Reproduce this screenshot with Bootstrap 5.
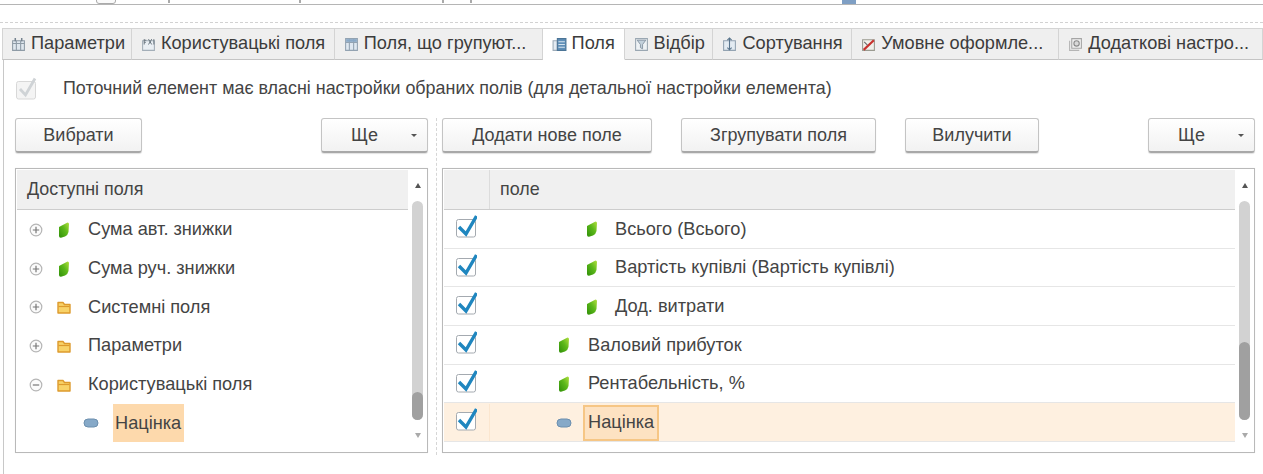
<!DOCTYPE html>
<html lang="uk">
<head>
    <meta charset="UTF-8">
    <meta name="viewport" content="width=device-width, initial-scale=1.0">
    <title>Поля</title>
    <link rel="stylesheet" href="https://cdn.jsdelivr.net/npm/bootstrap@5.3.3/dist/css/bootstrap.min.css">
    <style>
        html, body { height: 474px; overflow: hidden; }
        body { background: #fff; font-family: "Liberation Sans", Arial, sans-serif; font-size: 17.9px; color: #444; }
        .top-strip { height: 5px; border-bottom: 1px solid #b5b5b5; overflow: hidden; }
        .top-check { width: 20px; height: 12px; margin-top: -8px; margin-left: 96px; border: 1px solid #aaa; border-radius: 3px; background: #fafafa; }
        .top-dot { width: 2px; height: 3px; background: #aaa; }
        .top-dot-a { margin-left: 52px; }
        .top-dot-b { margin-left: 129px; }
        .top-dot-c { margin-left: 141px; }
        .top-dot-d { margin-left: 26px; }
        .top-blob { width: 14px; height: 4px; background: #7f9fc4; margin-left: 370px; }
        .dash-line { height: 0; border-top: 1px dashed #d2d2d2; margin-top: 17px; margin-bottom: 5px; }
        .tab-bar { padding-left: 2px; border-bottom: 0; flex-wrap: nowrap; height: 32px; }
        .tab-item { display: flex; align-items: center; gap: 5px; height: 32px; background: #efefef; color: #3c3c3c; border: 1px solid #d4d4d4; border-left: 0; border-bottom-color: #c4c4c4; font-size: 18.2px; white-space: nowrap; overflow: hidden; padding: 0 0 0 9px; }
        .tab-item:first-child { border-left: 1px solid #d4d4d4; padding-left: 8px; }
        .tab-item.is-active { background: #fff; border-bottom-color: #fff; }
        .tab-a { width: 130px; } .tab-b { width: 203px; } .tab-c { width: 208px; } .tab-d { width: 82px; }
        .tab-e { width: 89px; } .tab-f { width: 139px; } .tab-g { width: 207px; } .tab-h { width: 204px; }
        .tab-ico { width: 15px; height: 15px; flex: none; }
        .panel-body { border-left: 1px solid #c8c8c8; margin-left: 3px; padding: 17px 8px 0 11px; height: 415px; }
        .own-row { height: 23px; margin-bottom: 18px; }
        .own-check { width: 21px; height: 23px; margin-left: 1px; margin-right: 26px; flex: none; }
        .split { gap: 14px; }
        .side-left { width: 413px; flex: none; }
        .side-right { flex: 1; min-width: 0; }
        .split-line { position: relative; }
        .split-line::after { content: ""; position: absolute; left: 420.5px; top: 0; bottom: -2px; border-left: 1px dashed #d6d6d6; }
        .tool-row { height: 35px; margin-bottom: 15px; }
        .tool-btn { height: 35px; padding: 0; font-size: 18px; color: #444; background: linear-gradient(#fff, #f2f2f2); border: 1px solid #c4c4c4; border-bottom: 2px solid #a8a8a8; border-radius: 3px; box-shadow: 0 1px 1px rgba(0,0,0,.12); }
        .tool-btn:hover { color: #444; background: #f2f2f2; border-color: #c4c4c4; border-bottom-color: #a8a8a8; }
        .btn-pick { width: 127px; } .btn-add { width: 210px; } .btn-group-f { width: 195px; } .btn-del { width: 134px; } .btn-more { width: 107px; }
        .btn-group-f { margin-left: 29px; } .btn-del { margin-left: 29px; }
        .more-btn { display: flex; align-items: center; }
        .more-btn span { flex: 1; padding-right: 4px; }
        .more-btn::after { content: ""; width: 0; height: 0; border-left: 3px solid transparent; border-right: 3px solid transparent; border-top: 3px solid #555; margin-right: 10px; }
        .grid-box { height: 285px; border: 1px solid #b9b9b9; padding: 1px; box-shadow: 0 0 1px rgba(0,0,0,.08); }
        .grid-main { flex: 1; min-width: 0; }
        .grid-head { height: 40px; background: #f0f0f0; border-bottom: 1px solid #cdcdcd; }
        .head-check { width: 46px; height: 100%; border-right: 1px solid #dcdcdc; flex: none; }
        .head-text { padding-left: 10px; }
        .tree-row { height: 38.7px; padding-top: 1px; font-size: 18.2px; }
        .tree-toggle { width: 14px; height: 14px; margin-left: 12px; flex: none; }
        .tree-icon { width: 16px; height: 18px; flex: none; }
        .tree-toggle + .tree-icon { margin-left: 13px; margin-right: 16px; }
        .child-icon { margin-left: 66px; margin-right: 14px; }
        .hit-left { background: #fdd9ac; height: 100%; padding: 0 3px 0 2px; display: flex; align-items: center; }
        .grid-row { height: 38.7px; padding-top: 1px; font-size: 18.2px; border-bottom: 1px solid #e6e6e6; }
        .grid-row.is-current { background: #fef0e0; }
        .check-cell { width: 46px; height: 100%; flex: none; padding: 4px 0 0 12px; }
        .is-current .check-cell { border-right: 1px solid #fbe6cf; }
        .row-check { width: 21px; height: 23px; display: block; }
        .lvl-2 { margin-left: 94px; margin-right: 15px; }
        .lvl-1 { margin-left: 66px; margin-right: 16px; }
        .hit-right { background: #fde2c2; border: 2px solid #f6c685; height: 36px; padding: 0 3px; display: flex; align-items: center; margin-left: -5px; }
        .scroll-col { width: 18px; flex: none; padding: 0 3px 0 4px; }
        .arrow-up, .arrow-down { height: 31px; flex: none; }
        .arrow-up::before, .arrow-down::before { content: ""; width: 0; height: 0; border-left: 3.5px solid transparent; border-right: 3.5px solid transparent; }
        .arrow-up::before { border-bottom: 5px solid #555; }
        .arrow-down::before { border-top: 5px solid #aaa; }
        .scroll-track { flex: 1; width: 11px; background: #d2d2d2; border-radius: 6px; }
        .thumb-short { height: 28px; width: 11px; background: #a0a0a0; border-radius: 6px; }
        .thumb-long { height: 78px; width: 11px; background: #a0a0a0; border-radius: 6px; }
    </style>
</head>
<body>
    <svg width="0" height="0" class="d-block">
        <defs>
            <linearGradient id="leafg" x1="0" y1="1" x2="1" y2="0"><stop offset="0" stop-color="#2f8f08"/><stop offset=".55" stop-color="#5cb81a"/><stop offset="1" stop-color="#b4e040"/></linearGradient>
            <symbol id="i-table" viewBox="0 0 14 14"><path d="M1.500 3.500h11v9h-11z" fill="#dfe7ee" stroke="#8e9ba6"/><path d="M1.500 6h11M5 3.500v9M9 3.500v9" stroke="#8e9ba6" fill="none"/><path d="M4 1v3M10 1v3" stroke="#75838f" stroke-width="1.400"/></symbol>
            <symbol id="i-fx" viewBox="0 0 14 14"><path d="M1.500 3.500h11v9h-11z" fill="#eaeff4" stroke="#a3aeb8"/><path d="M3 2v5M3 3h2M3 5h1.500M7 2l3 5M10 2l-3 5M12 2v5" stroke="#66727c" stroke-width=".9" fill="none"/></symbol>
            <symbol id="i-group" viewBox="0 0 14 14"><path d="M1.500 1.500h11v11h-11z" fill="#dfe8f1" stroke="#93a3b2"/><path d="M1.500 5h11M5 1.500v11M9 1.500v11" stroke="#93a3b2" fill="none"/><path d="M2 2h10v2.500H2z" fill="#8aa9c6"/></symbol>
            <symbol id="i-fields" viewBox="0 0 14 14"><path d="M1 3.500h4v9H1z" fill="#e4ebf2" stroke="#9dabb8"/><path d="M5 1.500h8v11H5z" fill="#5f8fb8" stroke="#4b7496"/><path d="M6 4.500h6M6 7h6M6 9.500h6" stroke="#d5e3ee"/></symbol>
            <symbol id="i-filter" viewBox="0 0 14 14"><path d="M1.500 1.500h11v11h-11z" fill="#eef2f5" stroke="#9aa7b2"/><path d="M3 3h8L8 7v4L6 10V7z" fill="#c3d1dc" stroke="#7e8e9b" stroke-width=".8"/></symbol>
            <symbol id="i-sort" viewBox="0 0 14 14"><path d="M1.500 3.500h11v9h-11z" fill="#e3ebf2" stroke="#93a3b2"/><path d="M7 1v11M5 3l2-2 2 2M5 10l2 2 2-2" stroke="#58748c" fill="none"/></symbol>
            <symbol id="i-cond" viewBox="0 0 14 14"><path d="M1.500 2.500h11v10h-11z" fill="#f0f0ea" stroke="#9a9a90"/><path d="M2.500 12 12 3" stroke="#c8322e" stroke-width="2"/><path d="M3 4.500l3 3" stroke="#666"/></symbol>
            <symbol id="i-more" viewBox="0 0 14 14"><path d="M3.500 1.500h9v9h-9z" fill="#f0f0f0" stroke="#a5a5a5"/><path d="M1.500 3.500v9h9" fill="none" stroke="#b5b5b5"/><circle cx="8" cy="6" r="2.500" fill="#d8d8d8" stroke="#8a8a8a"/></symbol>
            <symbol id="i-plus" viewBox="0 0 14 14"><circle cx="7" cy="7" r="5.800" fill="#fbfbfb" stroke="#b5b5b5" stroke-width="1.200"/><path d="M3.800 7h6.400M7 3.800v6.400" stroke="#777" stroke-width="1.200"/></symbol>
            <symbol id="i-minus" viewBox="0 0 14 14"><circle cx="7" cy="7" r="5.800" fill="#fbfbfb" stroke="#b5b5b5" stroke-width="1.200"/><path d="M3.800 7h6.400" stroke="#777" stroke-width="1.200"/></symbol>
            <symbol id="i-leaf" viewBox="0 0 16 18"><path d="M3 6L11.500 1.500Q13 1.500 13 3L12.500 11Q12 14 9 15.500L5 16.800Q3 17 3 15Z" fill="url(#leafg)"/></symbol>
            <symbol id="i-folder" viewBox="0 0 16 18"><path d="M2 4.500h5l1.500 2h5.500v8.500H2z" fill="#f8d268" stroke="#dd9a2d" stroke-width="1.400" stroke-linejoin="round"/><path d="M2.500 8.500h11" stroke="#dd9a2d" stroke-width="1.200"/></symbol>
            <symbol id="i-dash" viewBox="0 0 16 18"><rect x="1" y="5" width="14" height="8" rx="4" fill="#86a9c8" stroke="#6c8fae"/></symbol>
            <symbol id="i-check" viewBox="0 0 21 23"><rect x=".5" y="4.500" width="19" height="17.500" rx="2" fill="#fff" stroke="#a4aab0"/><path d="M3 12L10 19L20.500 1" fill="none" stroke="#1f86bf" stroke-width="3.400"/></symbol>
            <symbol id="i-check-off" viewBox="0 0 21 23"><rect x=".5" y="4.500" width="19" height="17.500" rx="2" fill="#f4f4f4" stroke="#d8d8d8"/><path d="M4 12L9.500 18L19 1.500" fill="none" stroke="#cfd3d6" stroke-width="2.800"/></symbol>
        </defs>
    </svg>

    <div class="top-strip d-flex align-items-start">
        <div class="top-check"></div>
        <div class="top-dot top-dot-a"></div>
        <div class="top-dot top-dot-b"></div>
        <div class="top-dot top-dot-c"></div>
        <div class="top-dot top-dot-d"></div>
        <div class="top-blob"></div>
    </div>
    <div class="dash-line"></div>

    <div class="nav tab-bar">
        <div class="tab-item tab-a"><svg class="tab-ico"><use href="#i-table"/></svg>Параметри</div>
        <div class="tab-item tab-b"><svg class="tab-ico"><use href="#i-fx"/></svg>Користувацькі поля</div>
        <div class="tab-item tab-c"><svg class="tab-ico"><use href="#i-group"/></svg>Поля, що групуют...</div>
        <div class="tab-item tab-d is-active"><svg class="tab-ico"><use href="#i-fields"/></svg>Поля</div>
        <div class="tab-item tab-e"><svg class="tab-ico"><use href="#i-filter"/></svg>Відбір</div>
        <div class="tab-item tab-f"><svg class="tab-ico"><use href="#i-sort"/></svg>Сортування</div>
        <div class="tab-item tab-g"><svg class="tab-ico"><use href="#i-cond"/></svg>Умовне оформле...</div>
        <div class="tab-item tab-h"><svg class="tab-ico"><use href="#i-more"/></svg>Додаткові настро...</div>
    </div>

    <div class="panel-body">
        <div class="own-row d-flex align-items-center">
            <svg class="own-check"><use href="#i-check-off"/></svg>
            <span>Поточний елемент має власні настройки обраних полів (для детальної настройки елемента)</span>
        </div>

        <div class="split split-line d-flex">
            <div class="side-left">
                <div class="tool-row d-flex justify-content-between">
                    <button class="btn tool-btn btn-pick" type="button">Вибрати</button>
                    <button class="btn tool-btn btn-more more-btn" type="button"><span>Ще</span></button>
                </div>
                <div class="grid-box d-flex">
                    <div class="grid-main">
                        <div class="grid-head d-flex align-items-center head-text">Доступні поля</div>
                        <div class="tree-row d-flex align-items-center"><svg class="tree-toggle"><use href="#i-plus"/></svg><svg class="tree-icon"><use href="#i-leaf"/></svg>Сума авт. знижки</div>
                        <div class="tree-row d-flex align-items-center"><svg class="tree-toggle"><use href="#i-plus"/></svg><svg class="tree-icon"><use href="#i-leaf"/></svg>Сума руч. знижки</div>
                        <div class="tree-row d-flex align-items-center"><svg class="tree-toggle"><use href="#i-plus"/></svg><svg class="tree-icon"><use href="#i-folder"/></svg>Системні поля</div>
                        <div class="tree-row d-flex align-items-center"><svg class="tree-toggle"><use href="#i-plus"/></svg><svg class="tree-icon"><use href="#i-folder"/></svg>Параметри</div>
                        <div class="tree-row d-flex align-items-center"><svg class="tree-toggle"><use href="#i-minus"/></svg><svg class="tree-icon"><use href="#i-folder"/></svg>Користувацькі поля</div>
                        <div class="tree-row d-flex align-items-center"><svg class="tree-icon child-icon"><use href="#i-dash"/></svg><span class="hit-left">Націнка</span></div>
                    </div>
                    <div class="scroll-col d-flex flex-column">
                        <div class="arrow-up d-flex align-items-center justify-content-center"></div>
                        <div class="scroll-track d-flex flex-column justify-content-end"><div class="thumb-short"></div></div>
                        <div class="arrow-down d-flex align-items-center justify-content-center"></div>
                    </div>
                </div>
            </div>

            <div class="side-right">
                <div class="tool-row d-flex">
                    <button class="btn tool-btn btn-add" type="button">Додати нове поле</button>
                    <button class="btn tool-btn btn-group-f" type="button">Згрупувати поля</button>
                    <button class="btn tool-btn btn-del" type="button">Вилучити</button>
                    <button class="btn tool-btn btn-more more-btn ms-auto" type="button"><span>Ще</span></button>
                </div>
                <div class="grid-box d-flex">
                    <div class="grid-main">
                        <div class="grid-head d-flex align-items-center"><div class="head-check"></div><span class="head-text">поле</span></div>
                        <div class="grid-row d-flex align-items-center"><div class="check-cell"><svg class="row-check"><use href="#i-check"/></svg></div><svg class="tree-icon lvl-2"><use href="#i-leaf"/></svg>Всього (Всього)</div>
                        <div class="grid-row d-flex align-items-center"><div class="check-cell"><svg class="row-check"><use href="#i-check"/></svg></div><svg class="tree-icon lvl-2"><use href="#i-leaf"/></svg>Вартість купівлі (Вартість купівлі)</div>
                        <div class="grid-row d-flex align-items-center"><div class="check-cell"><svg class="row-check"><use href="#i-check"/></svg></div><svg class="tree-icon lvl-2"><use href="#i-leaf"/></svg>Дод. витрати</div>
                        <div class="grid-row d-flex align-items-center"><div class="check-cell"><svg class="row-check"><use href="#i-check"/></svg></div><svg class="tree-icon lvl-1"><use href="#i-leaf"/></svg>Валовий прибуток</div>
                        <div class="grid-row d-flex align-items-center"><div class="check-cell"><svg class="row-check"><use href="#i-check"/></svg></div><svg class="tree-icon lvl-1"><use href="#i-leaf"/></svg>Рентабельність, %</div>
                        <div class="grid-row is-current d-flex align-items-center"><div class="check-cell"><svg class="row-check"><use href="#i-check"/></svg></div><svg class="tree-icon lvl-1"><use href="#i-dash"/></svg><span class="hit-right">Націнка</span></div>
                    </div>
                    <div class="scroll-col d-flex flex-column">
                        <div class="arrow-up d-flex align-items-center justify-content-center"></div>
                        <div class="scroll-track d-flex flex-column justify-content-end"><div class="thumb-long"></div></div>
                        <div class="arrow-down d-flex align-items-center justify-content-center"></div>
                    </div>
                </div>
            </div>
        </div>
    </div>

    <script src="https://cdn.jsdelivr.net/npm/bootstrap@5.3.3/dist/js/bootstrap.bundle.min.js"></script>
</body>
</html>
